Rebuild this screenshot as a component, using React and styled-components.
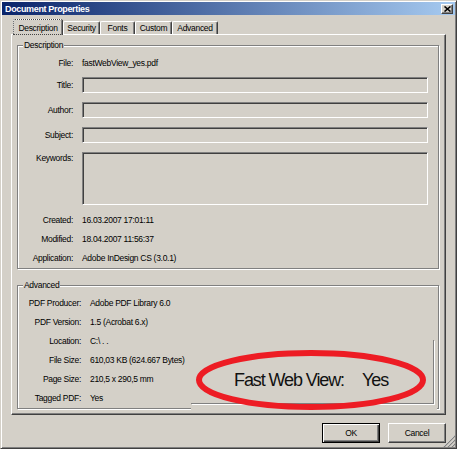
import React from "react";
import styled, { createGlobalStyle } from "styled-components";

const GlobalStyle = createGlobalStyle`
  html, body { margin: 0; padding: 0; background: #d4d0c8; }
  body {
    font-family: "Liberation Sans", Arial, sans-serif;
    font-size: 8.5px;
    letter-spacing: -0.3px;
    color: #000;
  }
  * { box-sizing: border-box; }
`;

const Window = styled.div`
  position: relative;
  width: 457px;
  height: 449px;
  display: flex;
  flex-direction: column;
  background: #d4d0c8;
  border: 1px solid;
  border-color: #d4d0c8 #404040 #404040 #d4d0c8;
  box-shadow: inset 1px 1px 0 #fff, inset -1px -1px 0 #808080;
  padding: 1px;
`;

const TitleBar = styled.div`
  height: 13px;
  display: flex;
  align-items: center;
  justify-content: space-between;
  padding: 0 2px 0 3px;
  background: linear-gradient(to right, #0a246a, #a6caf0);
  color: #fff;
  font-weight: bold;
  font-size: 9px;
  letter-spacing: -0.35px;
`;

const CloseButton = styled.div`
  width: 12px;
  height: 10px;
  display: flex;
  align-items: center;
  justify-content: center;
  background: #d4d0c8;
  border: 1px solid;
  border-color: #fff #404040 #404040 #fff;
  box-shadow: inset -1px -1px 0 #808080;
`;

const Body = styled.div`
  flex: 1;
  display: flex;
  flex-direction: column;
  padding: 4px 9px 4px 9px;
`;

const TabRow = styled.div`
  display: flex;
  align-items: flex-end;
  height: 15px;
  padding-left: 2px;
`;

const Tab = styled.div`
  position: relative;
  z-index: ${(p) => (p.$active ? 2 : 1)};
  width: ${(p) => p.$w}px;
  height: ${(p) => (p.$active ? 16 : 13)}px;
  margin-bottom: ${(p) => (p.$active ? -1 : 0)}px;
  display: flex;
  align-items: center;
  justify-content: center;
  background: #d4d0c8;
  border: 1px solid;
  border-bottom: none;
  border-color: #fff #404040 #404040 #fff;
  border-radius: 2px 2px 0 0;
  box-shadow: inset -1px 0 0 #808080;
  outline: ${(p) => (p.$active ? "1px dotted #444" : "none")};
  outline-offset: -1px;
`;

const Panel = styled.div`
  flex: 1;
  display: flex;
  flex-direction: column;
  border: 1px solid;
  border-color: #fff #404040 #404040 #fff;
  box-shadow: inset -1px -1px 0 #808080;
  padding: 10px 6px 0 5px;
`;

const Group = styled.div`
  position: relative;
  margin-top: ${(p) => p.$mt || 0}px;
  padding: ${(p) => p.$pt}px 10px ${(p) => p.$pb}px 0;
  border: 1px solid #808080;
  box-shadow: inset 1px 1px 0 #fff, 1px 1px 0 #fff;
`;

const Legend = styled.div`
  position: absolute;
  top: -7px;
  left: 5px;
  padding: 0 1px;
  line-height: 12px;
  background: #d4d0c8;
`;

const Row = styled.div`
  display: flex;
  align-items: ${(p) => (p.$top ? "flex-start" : "center")};
  height: ${(p) => p.$h}px;
  margin-top: ${(p) => p.$mt || 0}px;
`;

const Label = styled.div`
  flex: none;
  width: ${(p) => p.$w}px;
  margin-right: 9px;
  text-align: right;
  line-height: 12px;
`;

const Value = styled.div`
  white-space: nowrap;
  line-height: 12px;
`;

const Field = styled.div`
  flex: 1;
  align-self: stretch;
  border: 1px solid;
  border-color: #808080 #fff #fff #808080;
  box-shadow: inset 1px 1px 0 #404040, inset -1px -1px 0 #d4d0c8;
`;

const Patch = styled.div`
  position: absolute;
  left: 173px;
  top: 54px;
  width: 246px;
  height: 70px;
  background: #d4d0c8;
  &::after {
    content: "";
    position: absolute;
    left: 0;
    top: 0;
    width: 242px;
    height: 63px;
    border-right: 1px solid #808080;
    border-bottom: 1px solid #808080;
    box-shadow: 1px 1px 0 #fff;
  }
`;

const FastWeb = styled.div`
  position: absolute;
  left: 216px;
  top: 84px;
  display: flex;
  gap: 18px;
  font-size: 18px;
  letter-spacing: -1.1px;
  line-height: 20px;
  color: #111;
  white-space: nowrap;
`;

const Ellipse = styled.svg`
  position: absolute;
  left: 177px;
  top: 64px;
  overflow: visible;
`;

const Footer = styled.div`
  display: flex;
  justify-content: flex-end;
  gap: 8px;
  margin-top: 8px;
`;

const Button = styled.div`
  width: 58px;
  height: 20px;
  display: flex;
  align-items: center;
  justify-content: center;
  border: 1px solid;
  border-color: ${(p) => (p.$default ? "#000" : "#fff #404040 #404040 #fff")};
  box-shadow: ${(p) =>
    p.$default
      ? "inset 1px 1px 0 #fff, inset -1px -1px 0 #404040, inset -2px -2px 0 #808080"
      : "inset -1px -1px 0 #808080"};
`;

const Grip = styled.svg`
  position: absolute;
  right: 1px;
  bottom: 1px;
`;

const descRows = [
  { label: "Title:", mt: 6 },
  { label: "Author:", mt: 9 },
  { label: "Subject:", mt: 9 },
];

const dates = [
  ["Created:", "16.03.2007 17:01:11", 7],
  ["Modified:", "18.04.2007 11:56:37", 3],
  ["Application:", "Adobe InDesign CS (3.0.1)", 3],
];

const advanced = [
  ["PDF Producer:", "Adobe PDF Library 6.0"],
  ["PDF Version:", "1.5 (Acrobat 6.x)"],
  ["Location:", "C:\\ . ."],
  ["File Size:", "610,03 KB (624.667 Bytes)"],
  ["Page Size:", "210,5 x 290,5 mm"],
  ["Tagged PDF:", "Yes"],
];

const tabs = [
  ["Description", 50],
  ["Security", 37],
  ["Fonts", 35],
  ["Custom", 37],
  ["Advanced", 46],
];

export default function App() {
  return (
    <>
      <GlobalStyle />
      <Window>
        <TitleBar>
          <span>Document Properties</span>
          <CloseButton>
            <svg width="7" height="6" viewBox="0 0 7 6">
              <path d="M0.5 0.5 L6.5 5.5 M6.5 0.5 L0.5 5.5" stroke="#000" strokeWidth="1.6" />
            </svg>
          </CloseButton>
        </TitleBar>
        <Body>
          <TabRow>
            {tabs.map(([name, w], i) => (
              <Tab key={name} $w={w} $active={i === 0}>
                {name}
              </Tab>
            ))}
          </TabRow>
          <Panel>
            <Group $pt={9} $pb={2}>
              <Legend>Description</Legend>
              <Row $h={16}>
                <Label $w={55}>File:</Label>
                <Value>fastWebView_yes.pdf</Value>
              </Row>
              {descRows.map((r) => (
                <Row key={r.label} $h={16} $mt={r.mt}>
                  <Label $w={55}>{r.label}</Label>
                  <Field />
                </Row>
              ))}
              <Row $h={53} $mt={9} $top>
                <Label $w={55}>Keywords:</Label>
                <Field />
              </Row>
              {dates.map(([l, v, mt]) => (
                <Row key={l} $h={16} $mt={mt}>
                  <Label $w={55}>{l}</Label>
                  <Value>{v}</Value>
                </Row>
              ))}
            </Group>
            <Group $mt={16} $pt={7} $pb={1}>
              <Legend>Advanced</Legend>
              {advanced.map(([l, v]) => (
                <Row key={l} $h={19}>
                  <Label $w={63}>{l}</Label>
                  <Value>{v}</Value>
                </Row>
              ))}
              <Patch />
              <FastWeb>
                <span>Fast Web View:</span>
                <span>Yes</span>
              </FastWeb>
              <Ellipse width="232" height="60" viewBox="0 0 232 60">
                <ellipse cx="116" cy="30" rx="112" ry="27" fill="none" stroke="#ed1c24" strokeWidth="6" />
              </Ellipse>
            </Group>
          </Panel>
          <Footer>
            <Button $default>OK</Button>
            <Button>Cancel</Button>
          </Footer>
        </Body>
        <Grip width="12" height="12" viewBox="0 0 12 12">
          <path d="M11 1 L1 11 M11 5 L5 11 M11 9 L9 11" stroke="#fff" strokeWidth="1" />
          <path d="M12 1 L1 12 M12 5 L5 12 M12 9 L9 12" stroke="#808080" strokeWidth="1.2" />
        </Grip>
      </Window>
    </>
  );
}
